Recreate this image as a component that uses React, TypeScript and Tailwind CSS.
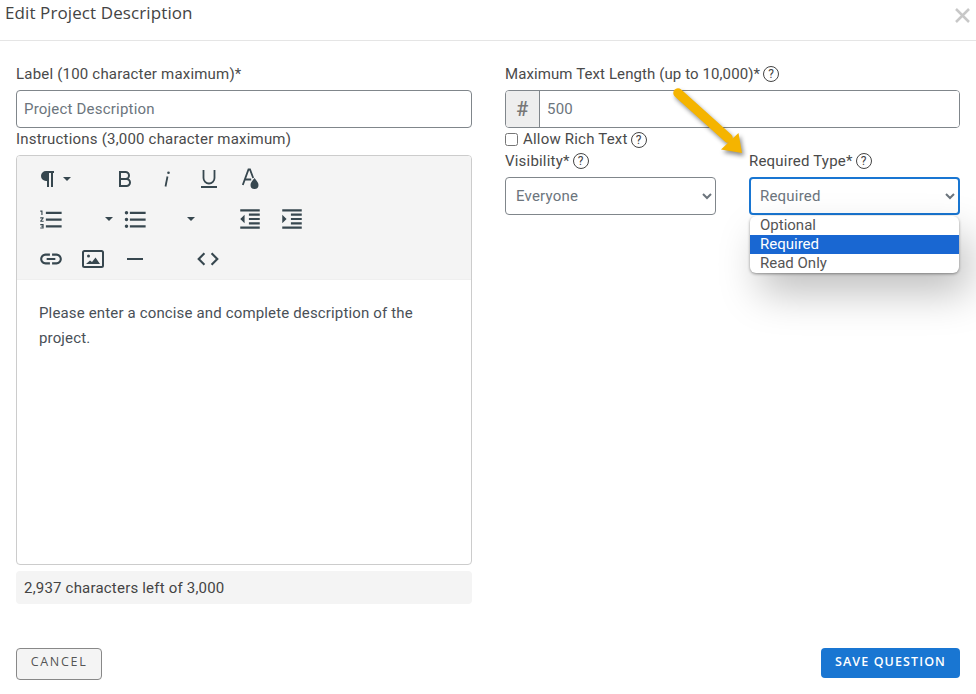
import type { ReactNode } from 'react';
import {
  MdCode,
  MdFormatIndentDecrease,
  MdFormatIndentIncrease,
  MdFormatListBulleted,
  MdFormatListNumbered,
  MdHorizontalRule,
  MdLink,
} from 'react-icons/md';

const iconColor = 'text-[#37474f]';

function HelpIcon() {
  return (
    <span className="ml-[3px] inline-flex h-[16px] w-[16px] shrink-0 items-center justify-center rounded-full border border-[#444] text-[12px] leading-none text-[#444]">
      ?
    </span>
  );
}

function Cell({ children, className = 'w-[42px]' }: { children?: ReactNode; className?: string }) {
  return <div className={`flex h-[40px] shrink-0 items-center justify-center ${iconColor} ${className}`}>{children}</div>;
}

function Caret() {
  return <span className="h-0 w-0 border-x-[4px] border-t-[4px] border-x-transparent border-t-[#37474f]" />;
}

function Pilcrow() {
  return (
    <svg width="14" height="16" viewBox="0 0 14 16" fill="none">
      <path d="M14 1H6a4 4 0 0 0 0 8h2M8 1v15M12 1v15" stroke="currentColor" strokeWidth="2" />
      <path d="M6 1a4 4 0 0 0 0 8h2V1z" fill="currentColor" />
    </svg>
  );
}

function BoldIcon() {
  return (
    <svg width="14" height="16" viewBox="0 0 14 16" fill="none">
      <path d="M2 1h5.500a3.500 3.500 0 0 1 0 7H2zM2 8h6.500a3.500 3.500 0 0 1 0 7H2z" stroke="currentColor" strokeWidth="2" />
    </svg>
  );
}

function ItalicIcon() {
  return (
    <svg width="8" height="16" viewBox="0 0 8 16" fill="none">
      <path d="M4.500 5.500L2.500 15.500" stroke="currentColor" strokeWidth="1.800" />
      <circle cx="5.500" cy="1.800" r="1.300" fill="currentColor" />
    </svg>
  );
}

function UnderlineIcon() {
  return (
    <svg width="16" height="18" viewBox="0 0 16 18" fill="none">
      <path d="M2.500 0v8a5.500 5.500 0 0 0 11 0V0" stroke="currentColor" strokeWidth="1.800" />
      <path d="M0 17h16" stroke="currentColor" strokeWidth="2" />
    </svg>
  );
}

function ColorIcon() {
  return (
    <svg width="18" height="22" viewBox="0 0 18 22" fill="none">
      <path d="M0.800 17L6.500 1.500h1.500l3.200 8.500M3.200 11.500h6" stroke="currentColor" strokeWidth="1.800" />
      <path d="M12.500 10c2.200 2.800 4 4.800 4 7a4 4 0 0 1-8 0c0-2.200 1.800-4.200 4-7z" fill="currentColor" />
    </svg>
  );
}

function ImageIcon() {
  return (
    <svg width="22" height="18" viewBox="0 0 22 18" fill="none">
      <rect x="1" y="1" width="20" height="16" rx="1.500" stroke="currentColor" strokeWidth="2" />
      <circle cx="6.500" cy="6" r="1.500" fill="currentColor" />
      <path d="M4 14l4-3.500 2 1.500 3.500-4.500L18 14z" fill="currentColor" />
    </svg>
  );
}

function Arrow() {
  return (
    <svg className="pointer-events-none absolute left-[668px] top-[82px] drop-shadow-[2px_3px_2px_rgba(0,0,0,0.45)]" width="80" height="76" viewBox="0 0 80 76" fill="none">
      <path d="M10 11L60 56" stroke="#f5b400" strokeWidth="9.500" strokeLinecap="round" />
      <path d="M53 67.500L74 71L70.500 51z" fill="#f5b400" />
    </svg>
  );
}

export default function App() {
  return (
    <div className="relative h-[694px] w-[976px] overflow-hidden bg-white font-['Roboto',sans-serif] text-[15px] tracking-[0.2px] text-[#4a4a4a]">
      <div className="flex h-[41px] items-start justify-between border-b border-[#e5e5e5] pl-[5px] pr-[6px]">
        <h1 className="mt-[2px] font-['Open_Sans',sans-serif] text-[17px] leading-[22px] tracking-[0.1px] text-[#444]">Edit Project Description</h1>
        <svg className="mt-[8px]" width="15" height="15" viewBox="0 0 15 15" fill="none">
          <path d="M1 1l13 13M14 1L1 14" stroke="#c8c8c8" strokeWidth="2.500" />
        </svg>
      </div>

      <div className="grid grid-cols-[456px_455px] gap-x-[33px] pl-[16px] pt-[23px]">
        <div>
          <label className="block h-[26px] leading-[20px]">Label (100 character maximum)*</label>
          <input
            readOnly
            value="Project Description"
            className="block h-[38px] w-full rounded-[4px] border border-[#80868b] bg-white px-[7px] text-[#6c757d] outline-none"
          />
          <label className="block h-[27px] pt-[1px] leading-[20px]">Instructions (3,000 character maximum)</label>
          <div className="h-[410px] overflow-hidden rounded-[4px] border border-[#ccc]">
            <div className="h-[123px] bg-[#f4f4f4] pt-[3px]">
              <div className="flex pl-[13px]">
                <Cell className="w-[42px] gap-[9px] pl-[8px]">
                  <Pilcrow />
                  <Caret />
                </Cell>
                <div className="w-[32px]" />
                <Cell><BoldIcon /></Cell>
                <Cell><ItalicIcon /></Cell>
                <Cell><UnderlineIcon /></Cell>
                <Cell><ColorIcon /></Cell>
              </div>
              <div className="flex pl-[13px]">
                <Cell><MdFormatListNumbered size={27} /></Cell>
                <Cell className="w-[42px] justify-end pr-[1px]"><Caret /></Cell>
                <Cell><MdFormatListBulleted size={27} /></Cell>
                <Cell className="w-[42px] justify-end pr-[3px]"><Caret /></Cell>
                <div className="w-[31px]" />
                <Cell><MdFormatIndentDecrease size={26} /></Cell>
                <Cell><MdFormatIndentIncrease size={26} /></Cell>
              </div>
              <div className="flex pl-[13px]">
                <Cell><MdLink size={26} /></Cell>
                <Cell><ImageIcon /></Cell>
                <Cell><MdHorizontalRule size={24} /></Cell>
                <div className="w-[31px]" />
                <Cell><MdCode size={26} /></Cell>
              </div>
            </div>
            <div className="border-t border-[#efefef] px-[22px] pt-[21px] text-[15px] leading-[25px] tracking-[0.15px] text-[#495057]">
              Please enter a concise and complete description of the project.
            </div>
          </div>
          <div className="mt-[6px] flex h-[33px] items-center rounded-[4px] bg-[#f4f4f4] px-[8px] pt-[1px] text-[#444]">
            2,937 characters left of 3,000
          </div>
        </div>

        <div>
          <label className="flex h-[26px] items-start leading-[20px] tracking-[0.1px]">
            Maximum Text Length (up to 10,000)*
            <span className="mt-[2px] flex"><HelpIcon /></span>
          </label>
          <div className="flex h-[38px] overflow-hidden rounded-[4px] border border-[#80868b]">
            <div className="flex w-[34px] items-center justify-center border-r border-[#80868b] bg-[#eee] text-[20px] font-medium text-[#777]">#</div>
            <input readOnly value="500" className="min-w-0 flex-1 bg-white px-[7px] text-[#6c757d] outline-none" />
          </div>
          <label className="flex h-[23px] items-center">
            <input type="checkbox" readOnly className="mr-[5px] h-[13px] w-[13px]" />
            Allow Rich Text
            <HelpIcon />
          </label>
          <div className="flex gap-x-[33px]">
            <div className="w-[211px]">
              <label className="flex h-[26px] items-start leading-[20px]">
                Visibility*
                <span className="mt-[2px] flex"><HelpIcon /></span>
              </label>
              <select
                defaultValue="Everyone"
                className="h-[38px] w-full rounded-[4px] border border-[#80868b] bg-white px-[6px] text-[15px] text-[#6c757d] outline-none"
              >
                <option>Everyone</option>
              </select>
            </div>
            <div className="relative w-[211px]">
              <label className="flex h-[26px] items-start leading-[20px]">
                Required Type*
                <span className="mt-[2px] flex"><HelpIcon /></span>
              </label>
              <select
                defaultValue="Required"
                className="h-[38px] w-full rounded-[4px] border-2 border-[#1976d2] bg-white px-[5px] text-[15px] text-[#6c757d] outline-none"
              >
                <option>Required</option>
              </select>
              <ul className="absolute left-[1px] top-[65px] w-[209px] overflow-hidden rounded-[6px] bg-white text-[15px] leading-[19px] tracking-normal text-[#555] shadow-[0_1px_3px_rgba(0,0,0,0.4),10px_20px_40px_rgba(0,0,0,0.25)]">
                <li className="pl-[10px]">Optional</li>
                <li className="bg-[#1967d2] pl-[10px] text-white">Required</li>
                <li className="pl-[10px]">Read Only</li>
              </ul>
            </div>
          </div>
        </div>
      </div>

      <div className="mt-[44px] flex items-start justify-between pl-[16px] pr-[16px]">
        <button className="h-[32px] w-[86px] rounded-[4px] border border-[#888] bg-[#f4f4f4] pb-[3px] font-['Open_Sans',sans-serif] text-[12.500px] tracking-[1.700px] text-[#555]">
          CANCEL
        </button>
        <button className="h-[30px] w-[139px] rounded-[4px] bg-[#1976d2] pb-[2px] font-['Open_Sans',sans-serif] text-[12.500px] font-semibold tracking-[1.100px] text-white">
          SAVE QUESTION
        </button>
      </div>

      <Arrow />
    </div>
  );
}
